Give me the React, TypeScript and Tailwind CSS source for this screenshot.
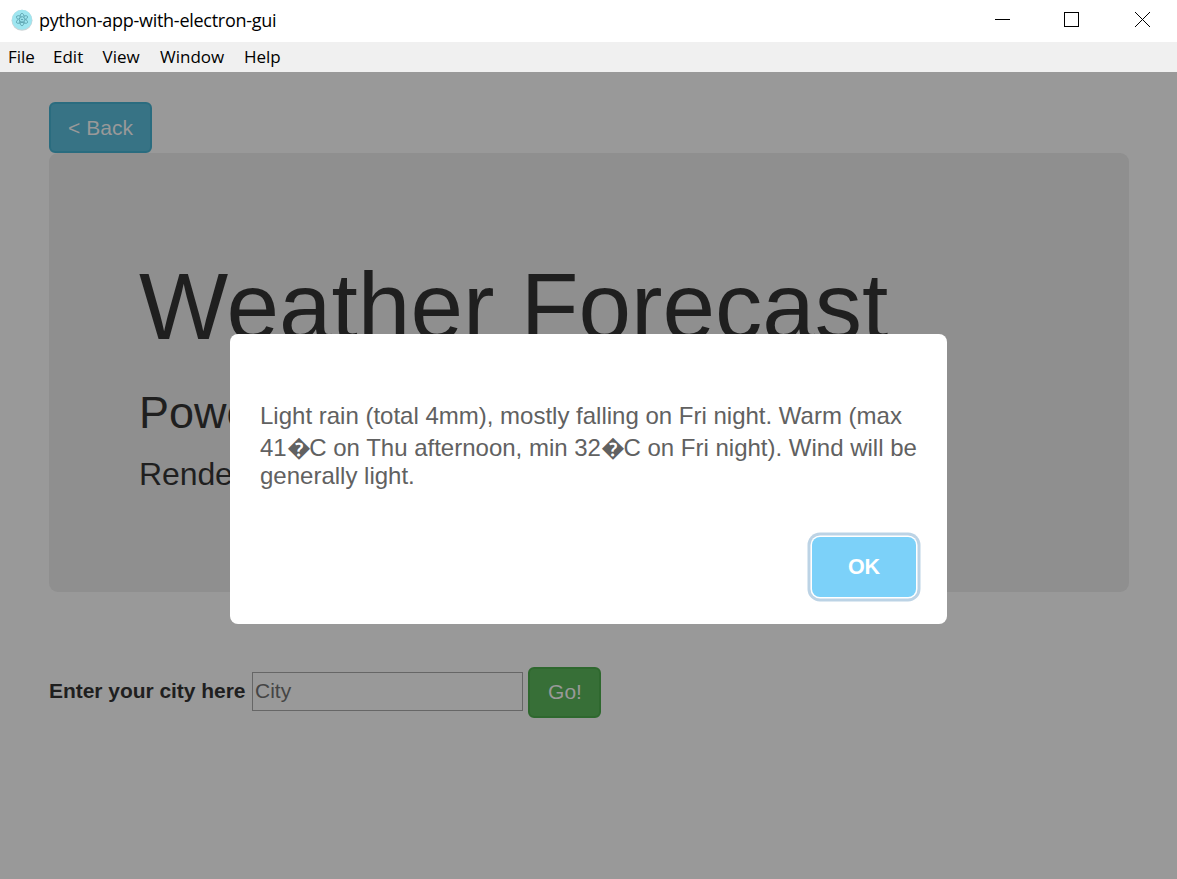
const Missing = () => <span className="-mr-[1.5px]">�</span>

export default function App() {
  return (
    <div className="relative flex h-[879px] w-[1177px] flex-col overflow-hidden bg-[#999999] font-['Liberation_Sans',sans-serif]">
      <header className="flex h-[42px] shrink-0 items-start bg-white font-['Open_Sans',sans-serif] text-black">
        <svg className="mt-[9px] ml-[11px]" width="22" height="22" viewBox="0 0 22 22">
          <circle cx="11" cy="11.3" r="10.5" fill="#cbd3d5" />
          <circle cx="11" cy="10.7" r="10" fill="#9fe6f0" />
          <g fill="none" stroke="#4b919e" strokeWidth=".65" strokeDasharray="9 1.2">
            <ellipse cx="11" cy="10.5" rx="6.3" ry="2.4" transform="rotate(30 11 10.5)" />
            <ellipse cx="11" cy="10.5" rx="6.3" ry="2.4" transform="rotate(90 11 10.5)" />
            <ellipse cx="11" cy="10.5" rx="6.3" ry="2.4" transform="rotate(150 11 10.5)" />
          </g>
          <circle cx="11" cy="10.5" r=".8" fill="#4b919e" />
        </svg>
        <h1 className="ml-1.5 text-[18px] leading-[40px] tracking-[-0.27px]">python-app-with-electron-gui</h1>
        <svg className="ml-auto" width="182" height="40" viewBox="0 0 182 40" fill="none" stroke="#000" shapeRendering="crispEdges">
          <path d="M0 19.5h15M69.500 12.500h14v14h-14z" />
          <path d="M140 12l15 15M155 12l-15 15" shapeRendering="auto" />
        </svg>
      </header>
      <nav className="flex h-[30px] shrink-0 items-center bg-[#f0f0f0] pl-2 font-['Open_Sans',sans-serif] text-[17px] text-black">
        <span className="w-[45px]">File</span>
        <span className="w-[49.500px]">Edit</span>
        <span className="w-[57.500px]">View</span>
        <span className="w-[84px]">Window</span>
        <span>Help</span>
      </nav>
      <main className="flex flex-col items-start px-[49px] pt-[30px] text-[#1f1f1f]">
        <button className="h-[51px] w-[103px] rounded-[6px] border-2 border-[#2a6c7f] bg-[#377385] text-[21px] text-[#999]">&lt; Back</button>
        <section className="h-[439px] w-[1080px] rounded-[9px] bg-[#8f8f8f] px-[90px] pt-[101px]">
          <h2 className="text-[94.500px] leading-[104px]">Weather Forecast</h2>
          <p className="mt-[30px] w-[91px] overflow-hidden text-[45px] leading-[50px] whitespace-nowrap">Powe</p>
          <p className="mt-[14px] w-[91px] overflow-hidden text-[32px] leading-[44px] tracking-[-0.1px] whitespace-nowrap">Rende</p>
        </section>
        <form className="mt-[75px] flex h-[51px] items-start text-[21px]">
          <label className="w-[203px] pt-1 leading-[40px] font-bold tracking-[-0.04px]">Enter your city here</label>
          <input className="mt-[5px] h-[39px] w-[271px] border border-[#666] bg-[#999] px-[2px] pb-[2px] placeholder:text-[#454545]" placeholder="City" />
          <button type="button" className="ml-[5px] h-[51px] w-[73px] rounded-[6px] border-2 border-[#2e682e] bg-[#376f37] pb-[2px] pl-px text-[21px] text-[#999]">Go!</button>
        </form>
      </main>
      <div role="dialog" className="absolute top-[334px] left-[230px] flex h-[290px] w-[717px] flex-col rounded-[8px] bg-white px-[30px] pt-[66px] text-[24px] whitespace-nowrap text-[#616161]">
        <p className="leading-[32px]">Light rain (total 4mm), mostly falling on Fri night. Warm (max</p>
        <p className="leading-[32px]">41<Missing />C on Thu afternoon, min 32<Missing />C on Fri night). Wind will be</p>
        <p className="leading-[24px]">generally light.</p>
        <button className="mt-[49px] mr-px h-[60px] w-[104px] self-end rounded-[8px] bg-[#7cd1f9] text-[21.500px] font-bold text-white shadow-[0_0_0_1.5px_#fff,0_0_0_4.5px_#bcd3e5]">OK</button>
      </div>
    </div>
  )
}
